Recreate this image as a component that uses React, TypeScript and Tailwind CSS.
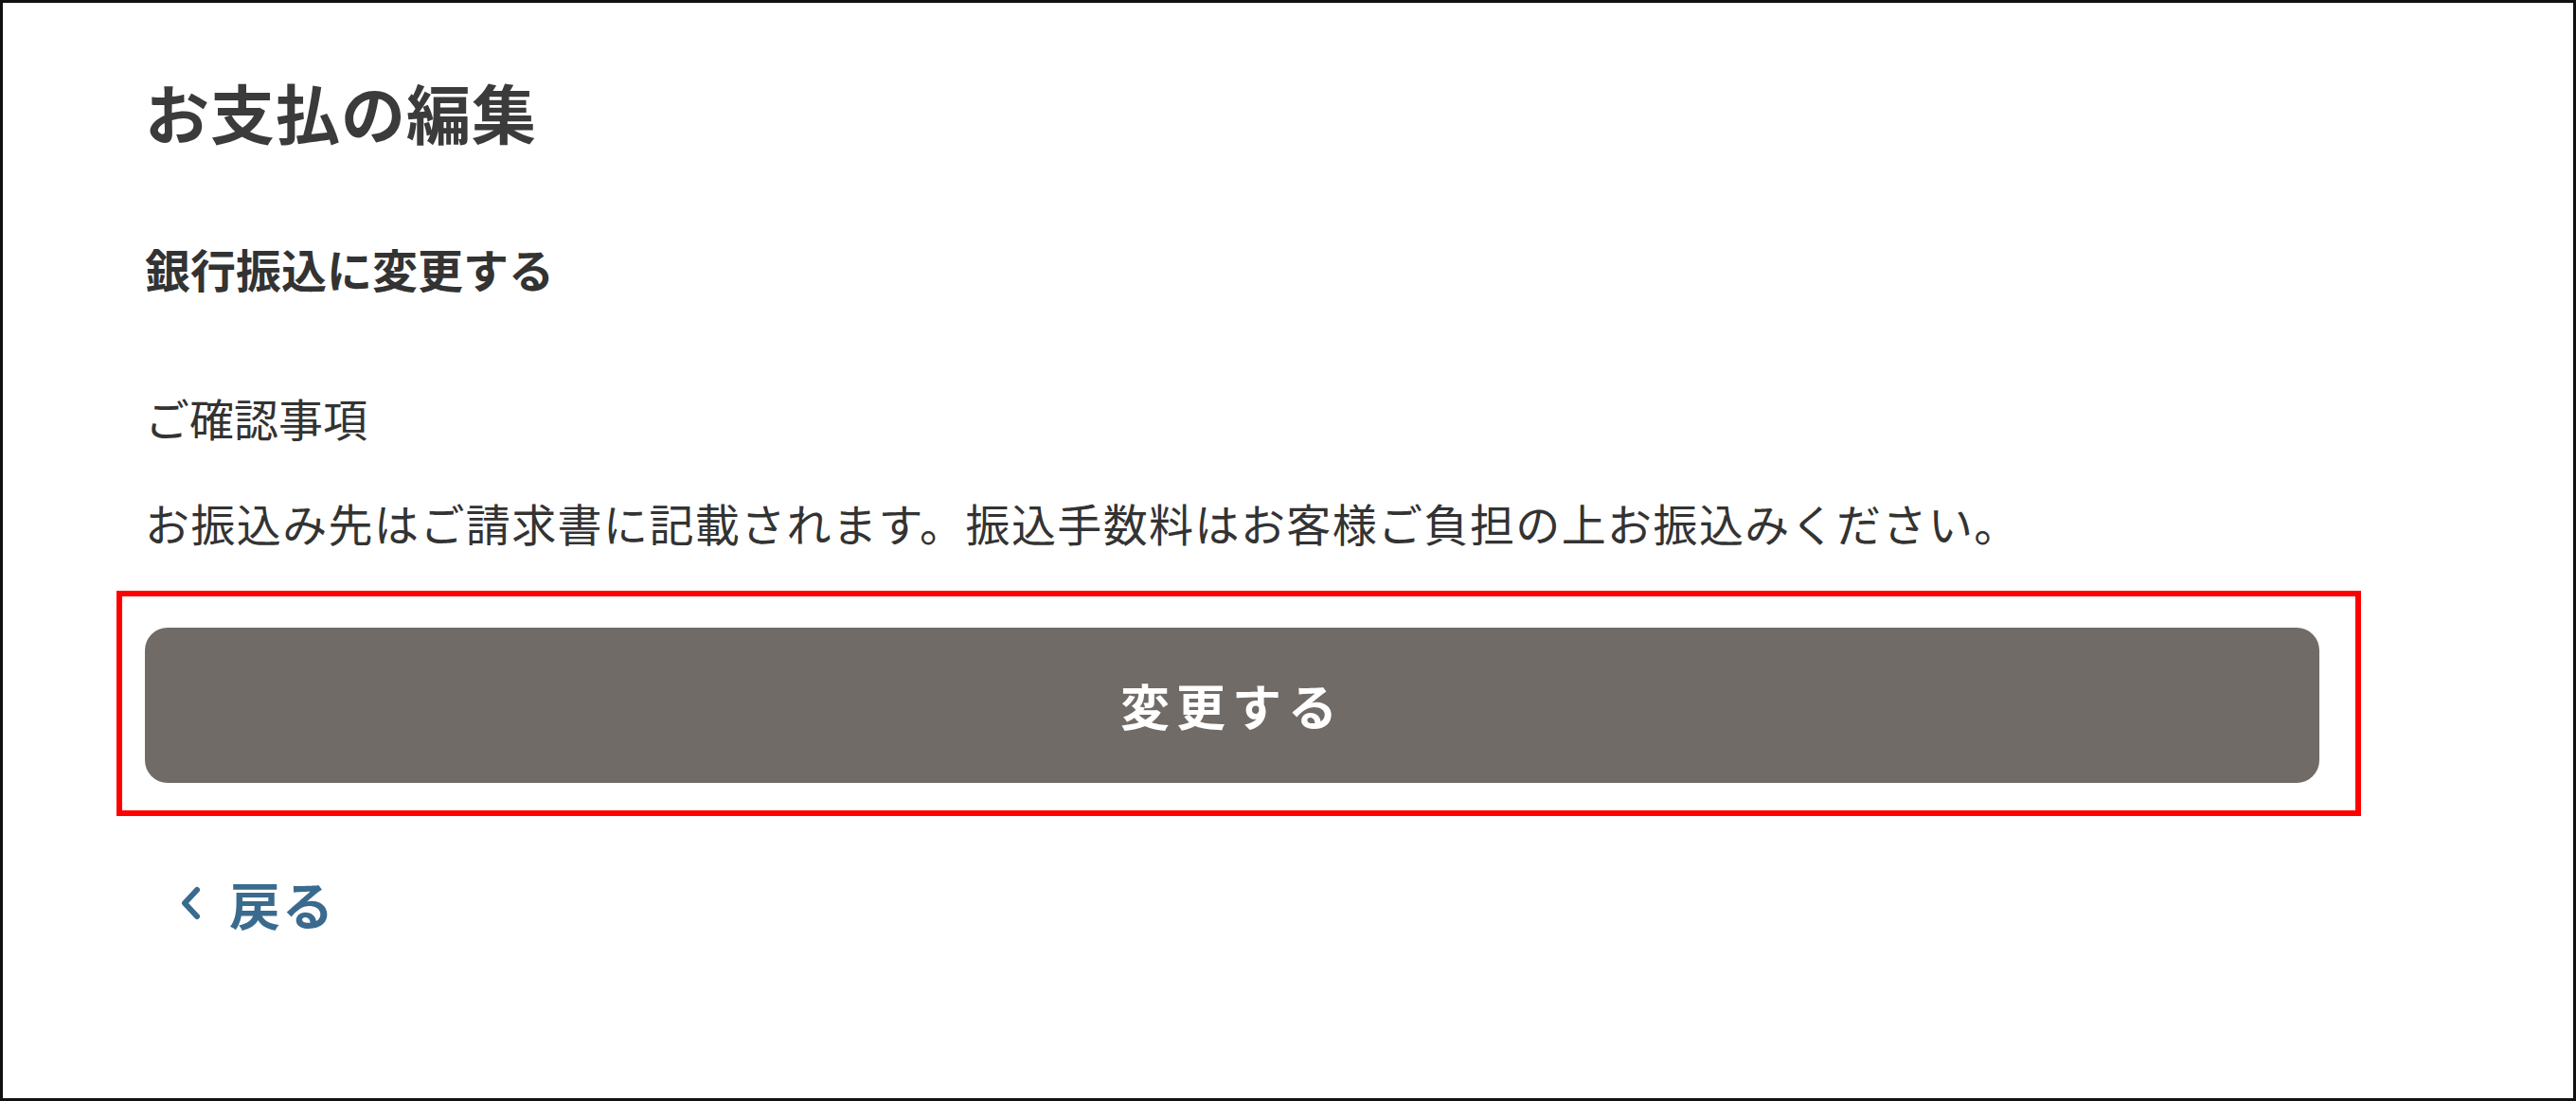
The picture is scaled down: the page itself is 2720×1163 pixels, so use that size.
export default function App() {
  return (
    <div
      className="w-[2720px] h-[1163px] bg-white border-[3px] border-[#111] box-border"
      style={{ fontFamily: '"Noto Sans CJK JP", "Noto Sans", sans-serif' }}
    >
      <div className="pl-[150px] pt-[65px] w-[2446px] flex flex-col">
        <h1 className="text-[68px] leading-[100px] font-bold text-[#3b3b3b] tracking-[1px]">お支払の編集</h1>

        <h2 className="mt-[80px] text-[48px] leading-[70px] font-bold text-[#333]">
          銀行振込に変更する
        </h2>

        <p className="mt-[88px] text-[47px] leading-[70px] text-[#333]">ご確認事項</p>
        <p className="mt-[41px] text-[47px] leading-[70px] text-[#333] tracking-[1.4px]">
          お振込み先はご請求書に記載されます。振込手数料はお客様ご負担の上お振込みください。
        </p>

        {/* annotation frame around the submit button */}
        <div className="mt-[37px] -ml-[30px] w-[2370px] h-[238px] border-[6px] border-[#ff0000] pl-[24px] pt-[33px]">
          <button className="w-[2296px] h-[164px] border-0 rounded-[24px] bg-[#706b67] text-white text-[52px] font-bold tracking-[7px] flex items-center justify-center">
            変更する
          </button>
        </div>

        <a className="mt-[57px] ml-[37px] flex items-center h-[70px] text-[#3a6b8e] font-bold text-[54px] tracking-[2px]">
          <svg width="24" height="36" viewBox="0 0 24 36" className="mr-[28px]">
            <path d="M18 4 L5 18 L18 32" fill="none" stroke="#3a6b8e" strokeWidth="6" strokeLinecap="round" strokeLinejoin="round" />
          </svg>
          戻る
        </a>
      </div>
    </div>
  );
}
